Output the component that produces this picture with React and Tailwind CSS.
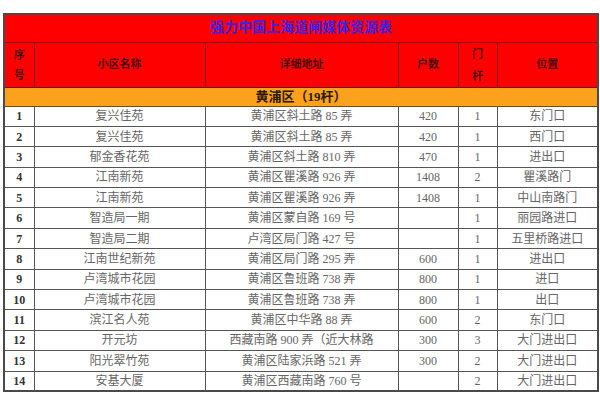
const rows = [
  ['1', '复兴佳苑', '黄浦区斜土路 85 弄', '420', '1', '东门口'],
  ['2', '复兴佳苑', '黄浦区斜土路 85 弄', '420', '1', '西门口'],
  ['3', '郁金香花苑', '黄浦区斜土路 810 弄', '470', '1', '进出口'],
  ['4', '江南新苑', '黄浦区瞿溪路 926 弄', '1408', '2', '瞿溪路门'],
  ['5', '江南新苑', '黄浦区瞿溪路 926 弄', '1408', '1', '中山南路门'],
  ['6', '智造局一期', '黄浦区蒙自路 169 号', '', '1', '丽园路进口'],
  ['7', '智造局二期', '卢湾区局门路 427 号', '', '1', '五里桥路进口'],
  ['8', '江南世纪新苑', '黄浦区局门路 295 弄', '600', '1', '进出口'],
  ['9', '卢湾城市花园', '黄浦区鲁班路 738 弄', '800', '1', '进口'],
  ['10', '卢湾城市花园', '黄浦区鲁班路 738 弄', '800', '1', '出口'],
  ['11', '滨江名人苑', '黄浦区中华路 88 弄', '600', '2', '东门口'],
  ['12', '开元坊', '西藏南路 900 弄（近大林路', '300', '3', '大门进出口'],
  ['13', '阳光翠竹苑', '黄浦区陆家浜路 521 弄', '300', '2', '大门进出口'],
  ['14', '安基大厦', '黄浦区西藏南路 760 号', '', '2', '大门进出口'],
];

const font = { fontFamily: '"Liberation Serif", "Noto Sans CJK SC", serif' };

export default function App() {
  return (
    <div className="w-[600px] h-[400px] bg-white pt-[13px] pl-[3px]" style={font}>
      <table className="w-[594px] table-fixed border-collapse border-2 border-[#4a4a4a]">
        <colgroup>
          <col className="w-[30px]" />
          <col className="w-[171px]" />
          <col className="w-[193px]" />
          <col className="w-[60px]" />
          <col className="w-[39px]" />
          <col className="w-[101px]" />
        </colgroup>
        <tbody>
          <tr className="h-[28px] bg-[#fe0000]">
            <td colSpan={6} className="border border-[#8a1010] text-center text-[14px] font-bold text-[#3a22e6] leading-none">
              强力中国上海道闸媒体资源表
            </td>
          </tr>
          <tr className="h-[41px] bg-[#fe0000] text-[11px] font-bold text-[#4a0808]">
            <td className="border border-[#7a1010] text-center leading-[20px]">序<br />号</td>
            <td className="border border-[#7a1010] text-center">小区名称</td>
            <td className="border border-[#7a1010] text-center">详细地址</td>
            <td className="border border-[#7a1010] text-center">户数</td>
            <td className="border border-[#7a1010] text-center leading-[22px]">门<br />杆</td>
            <td className="border border-[#7a1010] text-center">位置</td>
          </tr>
          <tr className="h-[19px] bg-[#fba11c]">
            <td colSpan={6} className="border border-[#7a4a10] text-center text-[13px] font-bold text-[#2a1a08] leading-none">
              黄浦区（19杆）
            </td>
          </tr>
          {rows.map((r) => (
            <tr key={r[0]} className="h-[20.4px] text-[12px] text-[#666] leading-none">
              <td className="border border-[#555] text-center font-bold text-[#333]">{r[0]}</td>
              <td className="border border-[#555] text-center">{r[1]}</td>
              <td className="border border-[#555] text-center whitespace-nowrap overflow-hidden">{r[2]}</td>
              <td className="border border-[#555] text-center">{r[3]}</td>
              <td className="border border-[#555] text-center">{r[4]}</td>
              <td className="border border-[#555] text-center">{r[5]}</td>
            </tr>
          ))}
        </tbody>
      </table>
    </div>
  );
}
